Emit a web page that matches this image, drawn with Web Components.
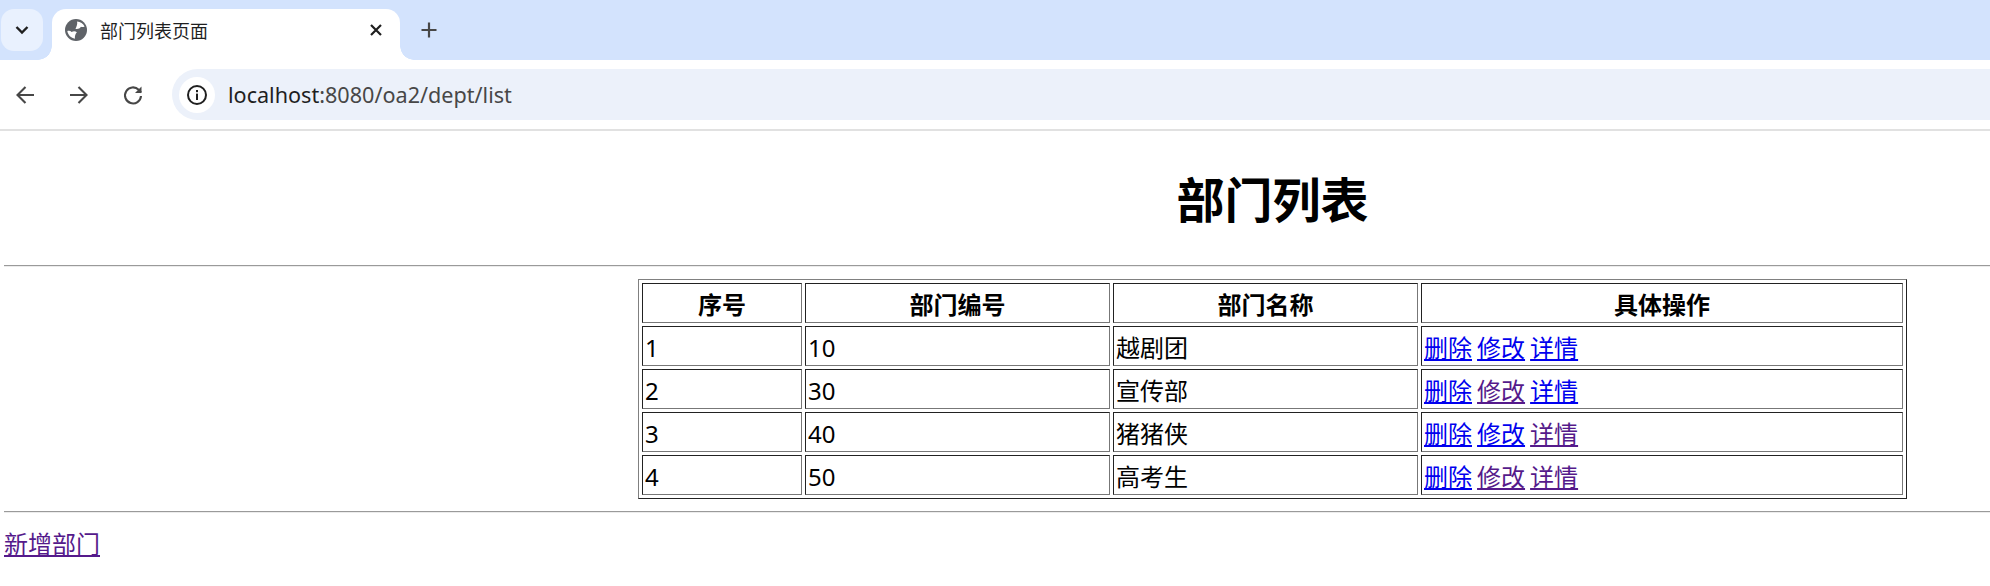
<!DOCTYPE html>
<html lang="zh-CN">
<head>
<meta charset="utf-8">
<title>部门列表页面</title>
<style>
  html, body { margin: 0; padding: 0; background: #fff; overflow: hidden; }
  browser-window { width: 1990px; height: 586px; }
</style>
</head>
<body>
<browser-window tab-title="部门列表页面" host-part="localhost" path-part=":8080/oa2/dept/list">
  <dept-page>
    <dept-table></dept-table>
  </dept-page>
</browser-window>

<template id="browser-window-tpl">
  <style>
    :host {
      display: flex;
      flex-direction: column;
      overflow: hidden;
      background: #fff;
      font-family: "Noto Sans", "Noto Sans CJK SC", sans-serif;
    }
    svg { display: block; flex: none; }
    .strip {
      display: flex;
      align-items: flex-end;
      height: 60px;
      flex: none;
      background: #d3e3fd;
      box-sizing: border-box;
      padding-left: 1px;
    }
    .tabs-btn {
      display: flex;
      align-items: center;
      justify-content: center;
      width: 42px;
      height: 42px;
      margin-bottom: 9px;
      border-radius: 13px;
      background: #e9f1fe;
    }
    .tab {
      position: relative;
      display: flex;
      align-items: center;
      box-sizing: border-box;
      width: 348px;
      height: 51px;
      margin-left: 9px;
      padding: 0 17px 9px 13px;
      background: #fff;
      border-radius: 14px 14px 0 0;
    }
    .tab::before, .tab::after {
      content: "";
      position: absolute;
      bottom: 0;
      width: 14px;
      height: 14px;
    }
    .tab::before {
      left: -14px;
      background: radial-gradient(circle at 0 0, transparent 13.5px, #fff 14px);
    }
    .tab::after {
      right: -14px;
      background: radial-gradient(circle at 100% 0, transparent 13.5px, #fff 14px);
    }
    .tab-title {
      flex: 1;
      margin-left: 13px;
      font-family: "Noto Sans CJK SC", sans-serif;
      font-size: 18px;
      color: #1f1f1f;
      white-space: nowrap;
    }
    .new-tab { margin: 0 0 9px 17px; width: 24px; height: 42px; display: flex; align-items: center; justify-content: center; }
    .toolbar {
      display: flex;
      align-items: center;
      flex: none;
      box-sizing: border-box;
      height: 71px;
      padding: 0 0 0 13px;
      border-bottom: 2px solid #e1e1e1;
      background: #fff;
    }
    .nav { display: flex; gap: 30px; }
    .omnibox {
      flex: 1;
      display: flex;
      align-items: center;
      height: 51px;
      margin-left: 27px;
      padding-left: 7px;
      border-radius: 26px 0 0 26px;
      background: #ecf1fa;
    }
    .info {
      display: flex;
      align-items: center;
      justify-content: center;
      width: 36px;
      height: 36px;
      border-radius: 50%;
      background: #fff;
    }
    .url { margin-left: 13px; font-size: 21.6px; color: #474747; white-space: nowrap; }
    .url b { font-weight: 400; color: #1f1f1f; }
    .content { flex: 1; min-height: 0; overflow: hidden; }
  </style>
  <div class="strip">
    <div class="tabs-btn">
      <svg width="20" height="20" viewBox="0 0 20 20" fill="none" stroke="#1f1f1f" stroke-width="2.4"><path d="M4.500 7l5.500 5.500L15.500 7"/></svg>
    </div>
    <div class="tab">
      <svg width="22" height="22" viewBox="0 0 20 20">
        <circle cx="10" cy="10" r="10" fill="#5f6368"/>
        <path fill="#fff" d="M11 2.200C14 2.400 16.600 4 17.800 6.800 16.800 7.300 15.500 7.500 14.500 7 13.500 8.800 11 9.500 9.500 8.800 10.500 7 11.500 4.500 11 2.200zM2.100 11C3.500 10.500 5 10.700 6 11.800 7.800 10.700 9.500 11 10.800 12 9.500 13.500 8.800 15.500 9 17.900 5.500 17.500 2.700 14.700 2.100 11z"/>
      </svg>
      <span class="tab-title"></span>
      <svg width="14" height="14" viewBox="0 0 14 14" stroke="#1f1f1f" stroke-width="2.2"><path d="M2 2l10 10M12 2L2 12"/></svg>
    </div>
    <div class="new-tab">
      <svg width="18" height="18" viewBox="0 0 18 18" stroke="#474747" stroke-width="2.2"><path d="M9 1.500v15M1.500 9h15"/></svg>
    </div>
  </div>
  <div class="toolbar">
    <div class="nav">
      <svg width="24" height="24" viewBox="0 0 24 24" fill="none" stroke="#474747" stroke-width="2.1"><path d="M21 12H4.500M12.500 4L4.500 12l8 8"/></svg>
      <svg width="24" height="24" viewBox="0 0 24 24" fill="none" stroke="#474747" stroke-width="2.1"><path d="M3 12h16.500M11.500 4l8 8-8 8"/></svg>
      <svg width="24" height="24" viewBox="0 0 24 24" fill="none" stroke="#474747" stroke-width="2.1"><path d="M20 13a8 8 0 1 1-2.300-6.200L20 9.500"/><path d="M20.500 3.500v6.500H14z" fill="#474747" stroke="none"/></svg>
    </div>
    <div class="omnibox">
      <div class="info">
        <svg width="22" height="22" viewBox="0 0 22 22"><circle cx="11" cy="11" r="9" fill="none" stroke="#1f1f1f" stroke-width="2"/><rect x="10" y="9.600" width="2" height="6.400" fill="#1f1f1f"/><rect x="10" y="6" width="2" height="2.200" fill="#1f1f1f"/></svg>
      </div>
      <span class="url"><b></b><span></span></span>
    </div>
  </div>
  <div class="content"><slot></slot></div>
</template>

<template id="dept-page-tpl">
  <style>
    :host {
      display: block;
      box-sizing: border-box;
      width: 2545px; /* the real page is wider than the crop */
      padding: 0 4px;
      font-family: "Noto Sans", "Noto Sans CJK SC", sans-serif;
      font-size: 24px;
      color: #000;
    }
    h1 {
      margin: 34px 0 30px;
      font-size: 48px;
      line-height: 70px;
      font-weight: 700;
      text-align: center;
    }
    hr {
      height: 0;
      margin: 0;
      border: 0;
      border-top: 1px solid #9a9a9a;
      border-bottom: 1px solid #ececec;
    }
    .mid { padding: 12px 0; }
    a { display: inline-block; margin-top: 12px; line-height: 37px; color: #551a8b; }
  </style>
  <h1>部门列表</h1>
  <hr>
  <div class="mid"><slot></slot></div>
  <hr>
  <a href="#add">新增部门</a>
</template>

<template id="dept-table-tpl">
  <style>
    :host { display: block; }
    table {
      width: 1269px;
      margin: 0 auto;
      table-layout: fixed;
      border-collapse: separate;
      border-spacing: 3px;
      border: 1px solid;
      border-color: #808080 #222 #222 #808080;
      font-size: 24px;
      line-height: 35px;
    }
    th, td {
      padding: 3px 2px 0;
      border: 1px solid;
      border-color: #222 #777 #777 #222;
    }
    th { font-weight: 700; text-align: center; }
    td { text-align: left; word-spacing: -1.2px; }
    a { color: #0000ee; }
    a.seen { color: #551a8b; }
  </style>
  <table>
    <colgroup>
      <col style="width:160px"><col style="width:305px"><col style="width:305px"><col>
    </colgroup>
    <thead>
      <tr><th>序号</th><th>部门编号</th><th>部门名称</th><th>具体操作</th></tr>
    </thead>
    <tbody></tbody>
  </table>
</template>

<script>
class BrowserWindow extends HTMLElement {
    constructor() {
        super();
        const shadow = this.attachShadow({ mode: 'open' });
        shadow.appendChild(document.getElementById('browser-window-tpl').content.cloneNode(true));
    }

    connectedCallback() {
        this.shadowRoot.querySelector('.tab-title').textContent = this.getAttribute('tab-title') || '';
        this.shadowRoot.querySelector('.url b').textContent = this.getAttribute('host-part') || '';
        this.shadowRoot.querySelector('.url span').textContent = this.getAttribute('path-part') || '';
    }
}

class DeptPage extends HTMLElement {
    constructor() {
        super();
        const shadow = this.attachShadow({ mode: 'open' });
        shadow.appendChild(document.getElementById('dept-page-tpl').content.cloneNode(true));
    }
}

class DeptTable extends HTMLElement {
    // which links the user already followed, in the order 删除 修改 详情
    #rows = [
        { no: 1, code: 10, name: '越剧团', seen: [false, false, false] },
        { no: 2, code: 30, name: '宣传部', seen: [false, true, false] },
        { no: 3, code: 40, name: '猪猪侠', seen: [false, false, true] },
        { no: 4, code: 50, name: '高考生', seen: [false, true, true] },
    ];

    constructor() {
        super();
        const shadow = this.attachShadow({ mode: 'open' });
        shadow.appendChild(document.getElementById('dept-table-tpl').content.cloneNode(true));
    }

    connectedCallback() {
        const actions = ['删除', '修改', '详情'];
        this.shadowRoot.querySelector('tbody').innerHTML = this.#rows
            .map((r) => {
                const links = actions
                    .map((a, i) => `<a href="#${a}" class="${r.seen[i] ? 'seen' : ''}">${a}</a>`)
                    .join(' ');
                return `<tr><td>${r.no}</td><td>${r.code}</td><td>${r.name}</td><td>${links}</td></tr>`;
            })
            .join('');
    }
}

customElements.define('browser-window', BrowserWindow);
customElements.define('dept-page', DeptPage);
customElements.define('dept-table', DeptTable);
</script>
</body>
</html>
